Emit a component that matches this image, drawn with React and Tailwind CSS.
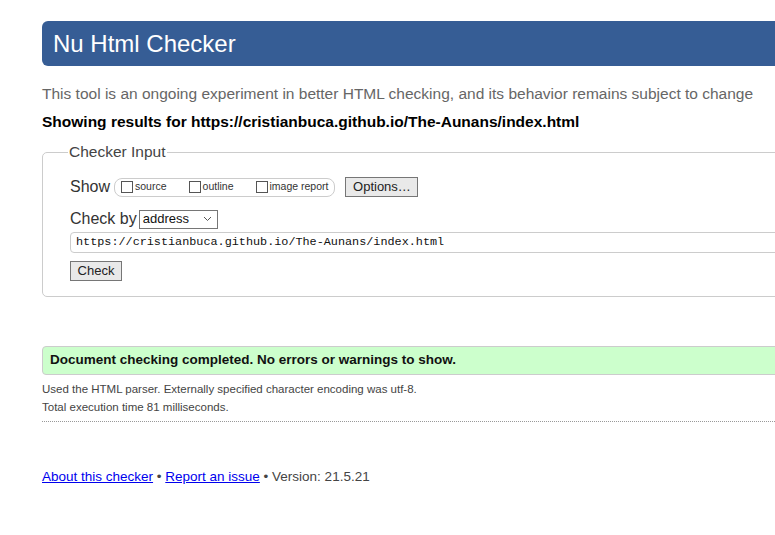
export default function App() {
  const font = { fontFamily: '"Liberation Sans", Arial, sans-serif' };
  return (
    <div className="w-[775px] h-[535px] overflow-hidden bg-white" style={font}>
      <div className="w-[820px] pl-[42px] pt-[21px] font-['Liberation_Sans',Arial,sans-serif]">
        <h1 className="h-[45px] bg-[#365d95] rounded-l-[6px] text-white text-[24px] leading-[45px] pl-[11px]">
          Nu Html Checker
        </h1>
        <p className="mt-[18px] text-[15.5px] leading-[20px] text-[#666] whitespace-nowrap">
          This tool is an ongoing experiment in better HTML checking, and its behavior remains subject to change
        </p>
        <p className="mt-[8px] text-[15.5px] leading-[20px] font-bold text-black whitespace-nowrap">
          Showing results for https://cristianbuca.github.io/The-Aunans/index.html
        </p>
        <fieldset className="mt-[11px] border border-[#ccc] rounded-l-[5px] pl-[27px] pb-[15px]">
          <legend className="text-[15.5px] text-[#444] px-[1px] -ml-[2px] leading-[18px]">Checker Input</legend>
          <div className="flex items-center mt-[16px] h-[20px]">
            <span className="text-[16px] text-[#333]">Show</span>
            <div className="ml-[4px] flex items-center h-[19px] border border-[#ccc] rounded-[8px] pl-[6px] pr-[6px] text-[10.5px] text-[#333]">
              <span className="inline-block w-[12px] h-[12px] border border-[#555] bg-white mr-[2px]"></span>
              <span>source</span>
              <span className="inline-block w-[12px] h-[12px] border border-[#555] bg-white ml-[22px] mr-[2px]"></span>
              <span>outline</span>
              <span className="inline-block w-[12px] h-[12px] border border-[#555] bg-white ml-[22px] mr-[2px]"></span>
              <span>image report</span>
            </div>
            <div className="ml-[10px] h-[20px] w-[73px] flex items-center justify-center border border-[#767676] bg-[#e9e9e9] text-[13px] text-[#222]">
              Options…
            </div>
          </div>
          <div className="flex items-center mt-[12px] h-[20px]">
            <span className="text-[16px] text-[#333]">Check by</span>
            <div className="ml-[2px] h-[19px] w-[79px] border border-[#767676] bg-white flex items-center justify-between pl-[3px] pr-[5px] text-[13px] text-[#111]">
              <span>address</span>
              <svg width="9" height="6" viewBox="0 0 9 6"><path d="M1 1l3.5 3.5L8 1" fill="none" stroke="#555" strokeWidth="1"/></svg>
            </div>
          </div>
          <div className="mt-[3px] h-[21px] border border-[#ccc] rounded-l-[4px] flex items-center pl-[5px] text-[11.8px] text-[#111] font-['Liberation_Mono',monospace] whitespace-nowrap">
            https://cristianbuca.github.io/The-Aunans/index.html
          </div>
          <div className="mt-[8px] h-[20px] w-[52px] flex items-center justify-center border border-[#767676] bg-[#e9e9e9] text-[13px] text-[#222]">
            Check
          </div>
        </fieldset>
        <div className="mt-[49px] h-[29px] bg-[#ccffcc] border border-[#ccc] rounded-l-[4px] flex items-center pl-[7px] text-[13.5px] font-bold text-[#111]">
          Document checking completed. No errors or warnings to show.
        </div>
        <p className="mt-[5px] text-[11.5px] leading-[18px] text-[#444]">
          Used the HTML parser. Externally specified character encoding was utf-8.
        </p>
        <p className="text-[11.5px] leading-[18px] text-[#444]">Total execution time 81 milliseconds.</p>
        <div className="mt-[5px] border-b border-dotted border-[#999] w-[733px]"></div>
        <p className="mt-[45px] text-[13.5px] text-[#444]">
          <a href="#" className="text-[#0000ee] underline">About this checker</a>
          {" • "}
          <a href="#" className="text-[#0000ee] underline">Report an issue</a>
          {" • Version: 21.5.21"}
        </p>
      </div>
    </div>
  );
}
